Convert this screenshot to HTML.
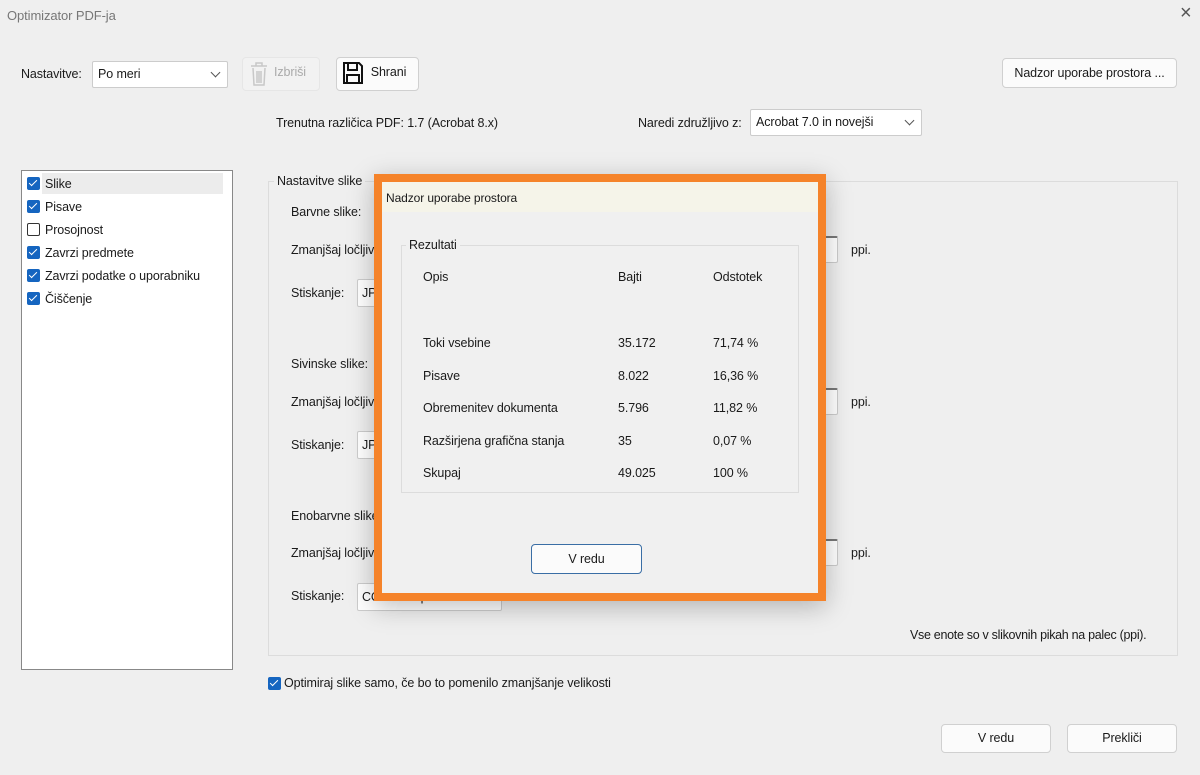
<!DOCTYPE html>
<html><head><meta charset="utf-8"><style>
*{box-sizing:border-box;margin:0;padding:0}
body{width:1200px;height:775px;background:#efefef;font-family:"Liberation Sans",sans-serif;font-size:12.5px;letter-spacing:-0.1px;color:#1a1a1a;position:relative;overflow:hidden}
.a{position:absolute;white-space:nowrap}
.btn{position:absolute;background:#fbfbfb;border:1px solid #d0d0d0;border-radius:4px;text-align:center}
.sel{position:absolute;background:#fff;border:1px solid #ccc;border-radius:2px;padding-left:5px}
.chev{position:absolute;right:8px;top:7px;width:7px;height:7px;border-right:1px solid #555;border-bottom:1px solid #555;transform:rotate(45deg)}
.cb{position:absolute;width:13px;height:13px;border-radius:2px;background:#1565c0}
.cb:after{content:"";position:absolute;left:4px;top:1px;width:3px;height:7px;border-right:1.5px solid #fff;border-bottom:1.5px solid #fff;transform:rotate(45deg)}
.cbe{position:absolute;width:13px;height:13px;border-radius:2px;border:1px solid #333;background:#fff}
.box{position:absolute;background:#fff;border:1px solid #ccc;border-radius:2px}
.d{font-size:12.5px}
</style></head><body>
<div class="a" style="left:7px;top:8px;color:#777;font-size:13px">Optimizator PDF-ja</div>
<div class="a" style="left:1180px;top:2px;font-size:20px;color:#555">×</div>

<div class="a" style="left:21px;top:67px">Nastavitve:</div>
<div class="sel" style="left:92px;top:61px;width:136px;height:27px;line-height:25px">Po meri<div class="chev"></div></div>
<div class="btn" style="left:242px;top:57px;width:78px;height:34px;background:#f2f2f2;border-color:#e6e6e6;color:#aaa;line-height:28px;padding-left:18px">Izbriši</div>
<svg class="a" style="left:249px;top:61px" width="20" height="26" viewBox="0 0 20 26"><path d="M2 5h16M7 5V2h6v3M4 7l1 17h10l1-17M8 10v12M10 10v12M12 10v12" stroke="#c8c8c8" stroke-width="1.5" fill="none"/></svg>
<div class="btn" style="left:336px;top:57px;width:83px;height:34px;line-height:28px;padding-left:22px">Shrani</div>
<svg class="a" style="left:342px;top:61px" width="22" height="24" viewBox="0 0 22 24"><path d="M2 2h15l3 3v17H2z" stroke="#111" stroke-width="2" fill="none"/><path d="M6 3v6h9V3M5 22v-8h12v8" stroke="#111" stroke-width="2" fill="none"/></svg>
<div class="btn" style="left:1002px;top:58px;width:175px;height:30px;line-height:28px">Nadzor uporabe prostora ...</div>

<div class="a" style="left:276px;top:116px">Trenutna različica PDF: 1.7 (Acrobat 8.x)</div>
<div class="a" style="left:638px;top:116px">Naredi združljivo z:</div>
<div class="sel" style="left:750px;top:109px;width:172px;height:27px;line-height:25px">Acrobat 7.0 in novejši<div class="chev"></div></div>

<div class="box" style="left:21px;top:170px;width:212px;height:500px;border-color:#888;border-radius:0"></div>
<div class="a" style="left:42px;top:173px;width:181px;height:21px;background:#ececec"></div>
<div class="cb" style="left:27px;top:177px"></div><div class="a" style="left:45px;top:177px">Slike</div>
<div class="cb" style="left:27px;top:200px"></div><div class="a" style="left:45px;top:200px">Pisave</div>
<div class="cbe" style="left:27px;top:223px"></div><div class="a" style="left:45px;top:223px">Prosojnost</div>
<div class="cb" style="left:27px;top:246px"></div><div class="a" style="left:45px;top:246px">Zavrzi predmete</div>
<div class="cb" style="left:27px;top:269px"></div><div class="a" style="left:45px;top:269px">Zavrzi podatke o uporabniku</div>
<div class="cb" style="left:27px;top:292px"></div><div class="a" style="left:45px;top:292px">Čiščenje</div>

<div class="a" style="left:268px;top:181px;width:910px;height:475px;border:1px solid #dcdcdc"></div>
<div class="a" style="left:274px;top:174px;background:#efefef;padding:0 3px">Nastavitve slike</div>
<div class="a" style="left:291px;top:205px">Barvne slike:</div>
<div class="a" style="left:291px;top:243px">Zmanjšaj ločljivost</div>
<div class="a" style="left:291px;top:286px">Stiskanje:</div>
<div class="box" style="left:357px;top:279px;width:145px;height:28px;line-height:26px;padding-left:4px">JPEG</div>
<div class="a" style="left:291px;top:357px">Sivinske slike:</div>
<div class="a" style="left:291px;top:395px">Zmanjšaj ločljivost</div>
<div class="a" style="left:291px;top:438px">Stiskanje:</div>
<div class="box" style="left:357px;top:431px;width:145px;height:28px;line-height:26px;padding-left:4px">JPEG</div>
<div class="a" style="left:291px;top:509px">Enobarvne slike:</div>
<div class="a" style="left:291px;top:546px">Zmanjšaj ločljivost</div>
<div class="a" style="left:291px;top:589px">Stiskanje:</div>
<div class="box" style="left:357px;top:583px;width:145px;height:28px;line-height:26px;padding-left:4px">CCITT skupina 4</div>
<div class="box" style="left:800px;top:236px;width:38px;height:27px;border-top:2px solid #777"></div>
<div class="box" style="left:800px;top:388px;width:38px;height:27px;border-top:2px solid #777"></div>
<div class="box" style="left:800px;top:539px;width:38px;height:27px;border-top:2px solid #777"></div>
<div class="a" style="left:851px;top:243px">ppi.</div>
<div class="a" style="left:851px;top:395px">ppi.</div>
<div class="a" style="left:851px;top:546px">ppi.</div>
<div class="a" style="left:910px;top:628px;letter-spacing:-0.3px">Vse enote so v slikovnih pikah na palec (ppi).</div>

<div class="cb" style="left:268px;top:677px"></div>
<div class="a" style="left:284px;top:676px">Optimiraj slike samo, če bo to pomenilo zmanjšanje velikosti</div>
<div class="btn" style="left:941px;top:724px;width:110px;height:29px;line-height:27px">V redu</div>
<div class="btn" style="left:1067px;top:724px;width:110px;height:29px;line-height:27px">Prekliči</div>

<div class="a" style="left:374px;top:174px;width:452px;height:427px;border:8px solid #f5832a;background:#f0f0f0;box-shadow:0 6px 24px rgba(0,0,0,.25)">
 <div style="position:absolute;left:0;top:0;width:100%;height:30px;background:#f5f4e9"></div>
 <div class="a" style="left:4px;top:9px;font-size:12px">Nadzor uporabe prostora</div>
 <div class="a" style="left:19px;top:63px;width:398px;height:248px;border:1px solid #dcdcdc"></div>
 <div class="a d" style="left:24px;top:56px;background:#f0f0f0;padding:0 3px">Rezultati</div>
 <div class="a d" style="left:41px;top:88px">Opis</div><div class="a d" style="left:236px;top:88px">Bajti</div><div class="a d" style="left:331px;top:88px">Odstotek</div>
 <div class="a d" style="left:41px;top:154px">Toki vsebine</div><div class="a d" style="left:236px;top:154px">35.172</div><div class="a d" style="left:331px;top:154px">71,74 %</div>
 <div class="a d" style="left:41px;top:187px">Pisave</div><div class="a d" style="left:236px;top:187px">8.022</div><div class="a d" style="left:331px;top:187px">16,36 %</div>
 <div class="a d" style="left:41px;top:219px">Obremenitev dokumenta</div><div class="a d" style="left:236px;top:219px">5.796</div><div class="a d" style="left:331px;top:219px">11,82 %</div>
 <div class="a d" style="left:41px;top:252px">Razširjena grafična stanja</div><div class="a d" style="left:236px;top:252px">35</div><div class="a d" style="left:331px;top:252px">0,07 %</div>
 <div class="a d" style="left:41px;top:284px">Skupaj</div><div class="a d" style="left:236px;top:284px">49.025</div><div class="a d" style="left:331px;top:284px">100 %</div>
 <div class="btn" style="left:149px;top:362px;width:111px;height:30px;line-height:28px;border-color:#3a6ea5;font-size:12.5px">V redu</div>
</div>
</body></html>
